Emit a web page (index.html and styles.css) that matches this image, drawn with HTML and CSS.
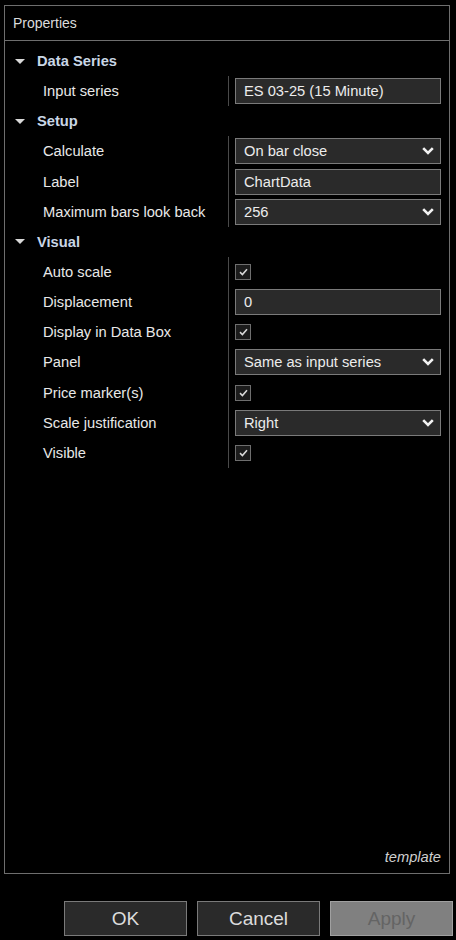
FILE: index.html
```html
<!DOCTYPE html>
<html>
<head>
<meta charset="utf-8">
<link rel="stylesheet" href="styles.css">
</head>
<body>
<div class="screen">
  <div class="panel">
    <div class="panel-title">Properties</div>
    <div class="panel-body">
      <div class="section">
        <div class="section-head"><span class="tri"></span><span>Data Series</span></div>
        <div class="prop"><div class="prop-label">Input series</div><div class="prop-value"><div class="field">ES 03-25 (15 Minute)</div></div></div>
      </div>
      <div class="section">
        <div class="section-head"><span class="tri"></span><span>Setup</span></div>
        <div class="prop"><div class="prop-label">Calculate</div><div class="prop-value"><div class="field select"><span>On bar close</span><svg class="chev" width="12" height="8" viewBox="0 0 12 8"><path d="M1.2 1.2 L6 6 L10.8 1.2" fill="none" stroke="#f2f2f2" stroke-width="2.6"/></svg></div></div></div>
        <div class="prop"><div class="prop-label">Label</div><div class="prop-value"><div class="field">ChartData</div></div></div>
        <div class="prop"><div class="prop-label">Maximum bars look back</div><div class="prop-value"><div class="field select"><span>256</span><svg class="chev" width="12" height="8" viewBox="0 0 12 8"><path d="M1.2 1.2 L6 6 L10.8 1.2" fill="none" stroke="#f2f2f2" stroke-width="2.6"/></svg></div></div></div>
      </div>
      <div class="section">
        <div class="section-head"><span class="tri"></span><span>Visual</span></div>
        <div class="prop"><div class="prop-label">Auto scale</div><div class="prop-value"><div class="check"><svg width="9" height="8" viewBox="0 0 9 8"><path d="M1 4.2 L3.4 6.5 L8 1.2" fill="none" stroke="#d8d8d8" stroke-width="1.6"/></svg></div></div></div>
        <div class="prop"><div class="prop-label">Displacement</div><div class="prop-value"><div class="field">0</div></div></div>
        <div class="prop"><div class="prop-label">Display in Data Box</div><div class="prop-value"><div class="check"><svg width="9" height="8" viewBox="0 0 9 8"><path d="M1 4.2 L3.4 6.5 L8 1.2" fill="none" stroke="#d8d8d8" stroke-width="1.6"/></svg></div></div></div>
        <div class="prop"><div class="prop-label">Panel</div><div class="prop-value"><div class="field select"><span>Same as input series</span><svg class="chev" width="12" height="8" viewBox="0 0 12 8"><path d="M1.2 1.2 L6 6 L10.8 1.2" fill="none" stroke="#f2f2f2" stroke-width="2.6"/></svg></div></div></div>
        <div class="prop"><div class="prop-label">Price marker(s)</div><div class="prop-value"><div class="check"><svg width="9" height="8" viewBox="0 0 9 8"><path d="M1 4.2 L3.4 6.5 L8 1.2" fill="none" stroke="#d8d8d8" stroke-width="1.6"/></svg></div></div></div>
        <div class="prop"><div class="prop-label">Scale justification</div><div class="prop-value"><div class="field select"><span>Right</span><svg class="chev" width="12" height="8" viewBox="0 0 12 8"><path d="M1.2 1.2 L6 6 L10.8 1.2" fill="none" stroke="#f2f2f2" stroke-width="2.6"/></svg></div></div></div>
        <div class="prop"><div class="prop-label">Visible</div><div class="prop-value"><div class="check"><svg width="9" height="8" viewBox="0 0 9 8"><path d="M1 4.2 L3.4 6.5 L8 1.2" fill="none" stroke="#d8d8d8" stroke-width="1.6"/></svg></div></div></div>
      </div>
      <div class="template">template</div>
    </div>
  </div>
  <div class="buttons">
    <button class="btn">OK</button>
    <button class="btn">Cancel</button>
    <button class="btn btn-disabled">Apply</button>
  </div>
</div>
</body>
</html>
```

FILE: styles.css
```css
* { box-sizing: border-box; }
html, body {
  margin: 0;
  padding: 0;
  background: #000;
}
body {
  font-family: Arial, "Liberation Sans", sans-serif;
  font-size: 14.7px;
  color: #e6e6e6;
}
.screen {
  width: 456px;
  height: 940px;
  display: flex;
  flex-direction: column;
  padding: 5px 0 0 4px;
}
.panel {
  height: 869px;
  margin-right: 6px;
  border: 1px solid #6e6e6e;
  display: flex;
  flex-direction: column;
}
.panel-title {
  height: 35px;
  border-bottom: 1px solid #6e6e6e;
  padding: 9px 0 0 8px;
  color: #dcdcdc;
  line-height: 16px;
  font-size: 14px;
}
.panel-body {
  flex: 1;
  display: flex;
  flex-direction: column;
  padding-top: 5px;
}
.section-head {
  height: 30.15px;
  display: flex;
  align-items: center;
  padding-left: 10px;
  gap: 12px;
  font-weight: bold;
  color: #c9d6e6;
}
.tri {
  width: 0;
  height: 0;
  border-left: 5px solid transparent;
  border-right: 5px solid transparent;
  border-top: 5px solid #d8d8d8;
}
.prop {
  height: 30.15px;
  display: flex;
}
.prop-label {
  width: 223px;
  padding-left: 38px;
  display: flex;
  align-items: center;
  color: #e8e8e8;
}
.prop-value {
  flex: 1;
  border-left: 1px solid #4a4a4a;
  padding: 0 8px 0 6px;
  display: flex;
  align-items: center;
}
.field {
  width: 100%;
  height: 26px;
  background: #2a2a2a;
  border: 1px solid #7a7a7a;
  padding: 0 6px 0 8px;
  display: flex;
  align-items: center;
  justify-content: space-between;
  color: #ececec;
}
.chev { display: block; }
.check {
  width: 16px;
  height: 16px;
  border: 1px solid #6e6e6e;
  background: #1c1c1c;
  display: flex;
  align-items: center;
  justify-content: center;
}
.check svg { display: block; }
.template {
  margin-top: auto;
  text-align: right;
  font-style: italic;
  color: #cfcfcf;
  padding: 0 8px 8px 0;
}
.buttons {
  display: flex;
  justify-content: flex-end;
  gap: 10px;
  padding: 27px 3px 0 0;
}
.btn {
  width: 123px;
  height: 35px;
  background: #2a2a2a;
  border: 1px solid #7a7a7a;
  color: #dcdcdc;
  font-family: Arial, "Liberation Sans", sans-serif;
  font-size: 19px;
  padding: 0;
}
.btn-disabled {
  background: #808080;
  border-color: #a0a0a0;
  color: #646464;
}
```
